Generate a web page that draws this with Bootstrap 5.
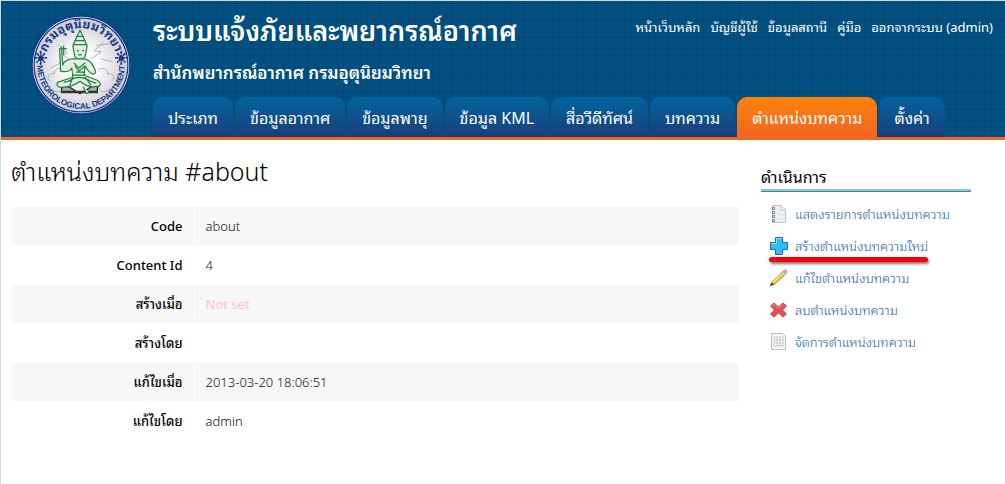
<!DOCTYPE html>
<html lang="th">
<head>
<meta charset="utf-8">
<meta name="viewport" content="width=device-width, initial-scale=1">
<title>ระบบแจ้งภัยและพยากรณ์อากาศ</title>
<link href="https://cdn.jsdelivr.net/npm/bootstrap@5.3.0/dist/css/bootstrap.min.css" rel="stylesheet">
<style>
body{font-family:"Noto Sans","Noto Sans Thai Looped",sans-serif;font-size:13px;line-height:20px;font-weight:300;color:#111;background:#fff}
a{text-decoration:none;white-space:nowrap}
.page{border-top:1px solid #c4e1ea;border-left:1px solid #c4e1ea;min-height:100vh}
.masthead{color:#fff;background-color:#015081;background-image:linear-gradient(#00000014 1px,transparent 1px),linear-gradient(90deg,#00000014 1px,transparent 1px),linear-gradient(#0000000b 1px,transparent 1px),linear-gradient(90deg,#0000000b 1px,transparent 1px);background-size:18px 18px,18px 18px,6px 6px,6px 6px;border-bottom:3px solid #f26522}
.seal{width:102px;height:102px;margin:13px 21px 0 29px}
.site-name{font-size:27px;line-height:36px;font-weight:600;margin:12px 0 0}
.site-owner{font-size:17px;line-height:24px;font-weight:600;margin:12px 0 12px}
.user-links{padding:16px 12px 0 0;gap:10px;font-weight:400}
.user-links a{color:#fff}
.tabs{gap:2px}
.tabs a{display:block;height:40px;padding:0 15px;line-height:42px;font-size:16px;font-weight:400;color:#fff;border-radius:10px 10px 0 0;background:linear-gradient(#0065a0,#1c3d78)}
.tabs a.active{background:linear-gradient(#ff8209,#f26522)}
.main-col{padding-left:10px}
.side-col{flex:0 0 244px;padding:26px 34px 0 0}
h1{font-size:25px;line-height:36px;font-weight:300;color:#000;margin:13px 0 17px}
.detail{width:calc(100% - 21px);border-collapse:separate;border-spacing:1px}
.detail th,.detail td{height:38px;padding:0 11px;vertical-align:middle}
.detail th{width:25%;text-align:right;font-weight:500;color:#000}
.detail tr:nth-child(odd)>*{background:#f7f7f7}
.unset{color:pink;font-weight:400}
h2{font-size:16px;line-height:22px;font-weight:400;color:#000;margin:0 0 6px;padding-bottom:3px;border-bottom:1px solid #2a8f9c;box-shadow:inset 0 -2px #8ec9cf}
.ops a{display:inline-flex;align-items:center;gap:6px;height:32px;color:#1262b0;position:relative}
.ops{padding-left:8px}
.ops svg{width:20px;height:20px}
.ops a.marked::after{content:"";position:absolute;left:0;right:0;bottom:0;height:5px;border-radius:3px;background:#f8000b;box-shadow:1px 2px 3px #0008}
</style>
</head>
<body>
<div class="page">
<header class="masthead d-flex align-items-start">
<svg class="seal flex-shrink-0" viewBox="0 0 100 100" role="img" aria-label="กรมอุตุนิยมวิทยา">
<defs><path id="arcTop" d="M14 50a36 36 0 0 1 72 0"/><path id="arcLow" d="M7 50a43 43 0 0 0 86 0"/><radialGradient id="glow"><stop offset=".3" stop-color="#fff"/><stop offset="1" stop-color="#cfcbd8"/></radialGradient></defs>
<circle cx="50" cy="50" r="48" fill="#fff" stroke="#163a84" stroke-width="1.4"/>
<circle cx="50" cy="50" r="46" fill="url(#glow)" stroke="#163a84" stroke-width="1.3"/>
<g fill="#173b83" font-weight="700"><text font-size="12" text-anchor="middle"><textPath href="#arcTop" startOffset="50%">กรมอุตุนิยมวิทยา</textPath></text>
<text font-size="8" font-family="Liberation Sans,sans-serif" text-anchor="middle"><textPath href="#arcLow" startOffset="50%">METEOROLOGICAL DEPARTMENT</textPath></text></g>
<g stroke="#173b83" stroke-width="1.8" stroke-linecap="round" stroke-dasharray="1.5 2"><path d="M5 43h11M10.500 37v12M7 39l7 8M14 39l-7 8M84 43h11M89.500 37v12M86 39l7 8M93 39l-7 8"/></g>
<g fill="none" stroke="#9a97a3" stroke-width=".7"><path d="M20 66c-5-4-1-9 4-7-1-6 7-8 9-3M80 66c5-4 1-9-4-7 1-6-7-8-9-3M22 74c5 5 11 1 11-3M78 74c-5 5-11 1-11-3M28 30l9 8-5 2 8 5M72 28l-9 8 7 1-10 7M65 31l13-2M70 44l11 3M20 53l10-5"/></g>
<path d="M31 67l18 11 17-10v9H31zM32 76h34" fill="#aaa" stroke="#333" stroke-width="1.4"/>
<g fill="#e2efe2" stroke="#21803c" stroke-width="1.2" stroke-linejoin="round"><path d="M49 16l7 15-2 11q-5 5-10 0l-2-11z"/><path d="M44 26h10M43 30h12M45 22h8M46 36h2m3 0h2M47 40h4"/><path d="M43 44q-9 0-11 6l-1-17-2 1 1 22q8 2 11-3l1 9-15 5q-2 4 3 5 12 0 19-6 8 7 17 5 6-1 0-6l-13-5 1-9q4 7 8 8 4-1 1-6-4-10-13-9z"/><path d="M33 31v9M30 34h6M38 66q9-7 20-1M43 48l5 5 6-5M44 51l4 5 6-5M45 57h9M42 60h12M42 62l-3 8M54 62l6 8M33 67l8-2M57 65l8 3M52 71l3 7 3-1"/></g>
</svg>
<div class="flex-grow-1">
<div class="d-flex justify-content-between">
<div><p class="site-name">ระบบแจ้งภัยและพยากรณ์อากาศ</p><p class="site-owner">สำนักพยากรณ์อากาศ กรมอุตุนิยมวิทยา</p></div>
<nav class="user-links d-flex"><a href="#">หน้าเว็บหลัก</a><a href="#">บัญชีผู้ใช้</a><a href="#">ข้อมูลสถานี</a><a href="#">คู่มือ</a><a href="#">ออกจากระบบ (admin)</a></nav>
</div>
<nav class="tabs d-flex"><a href="#">ประเภท</a><a href="#">ข้อมูลอากาศ</a><a href="#">ข้อมูลพายุ</a><a href="#">ข้อมูล KML</a><a href="#">สื่อวีดีทัศน์</a><a href="#">บทความ</a><a href="#" class="active" aria-current="page">ตำแหน่งบทความ</a><a href="#">ตั้งค่า</a></nav>
</div>
</header>
<div class="d-flex">
<main class="main-col flex-grow-1">
<h1>ตำแหน่งบทความ #about</h1>
<table class="detail">
<tr><th scope="row">Code</th><td>about</td></tr>
<tr><th scope="row">Content Id</th><td>4</td></tr>
<tr><th scope="row">สร้างเมื่อ</th><td><span class="unset">Not set</span></td></tr>
<tr><th scope="row">สร้างโดย</th><td></td></tr>
<tr><th scope="row">แก้ไขเมื่อ</th><td>2013-03-20 18:06:51</td></tr>
<tr><th scope="row">แก้ไขโดย</th><td>admin</td></tr>
</table>
</main>
<aside class="side-col">
<h2>ดำเนินการ</h2>
<ul class="ops list-unstyled d-flex flex-column align-items-start">
<li><a href="#"><svg viewBox="0 0 20 20"><path d="M3.500 1.500h9l4 4v13h-13z" fill="#eaf0f6" stroke="#bcc3ca"/><path d="M12.500 1.500v4h4" fill="#fff" stroke="#bcc3ca"/><path d="M9 7h5M9 11h6M9 15h6" stroke="#d5dde5"/><g fill="#fff" stroke="#667"><path d="M3.500 3.500h2v2h-2zM3.500 7.500h2v2h-2zM3.500 11.500h2v2h-2zM3.500 15.500h2v2h-2z" stroke-width=".8"/></g></svg>แสดงรายการตำแหน่งบทความ</a></li>
<li><a href="#" class="marked"><svg viewBox="0 0 20 20"><path d="M6.500 1.500h7v5h5v7h-5v5h-7v-5h-5v-7h5z" fill="#30bdf5" stroke="#176fae" stroke-linejoin="round"/><path d="M7.500 7.500v-5h5M2.500 7.500h5" stroke="#8be0ff" fill="none"/></svg>สร้างตำแหน่งบทความใหม่</a></li>
<li><a href="#"><svg viewBox="0 0 20 20"><path d="M1.500 17.500l2-4L13 4l3 3-10 9z" fill="#f4bd43" stroke="#b9892e" stroke-width=".8"/><path d="M4 14.500L13.500 5" stroke="#ffe79a" stroke-width="1.2"/><path d="M12 5l2-2 3 3-2 2z" fill="#d8dce2" stroke="#999" stroke-width=".6"/><path d="M13.500 3.500l1.500-1.500q3-1 3 2.500L16.500 6z" fill="#f2a3a8" stroke="#c37a80" stroke-width=".6"/><path d="M1 18l1.500-3.500 2.500 2z" fill="#333"/></svg>แก้ไขตำแหน่งบทความ</a></li>
<li><a href="#"><svg viewBox="0 0 20 20"><path d="M5 3l4.500 4L14 3l3.500 3L13.500 10l4 4L14 17l-4.500-4L5 17l-3.500-3L5.500 10l-4-4z" fill="#dc5353" stroke="#c74848" stroke-linejoin="round"/><path d="M3 6l2-1.500 4.500 4L14 4.500" fill="none" stroke="#ee8c8c"/></svg>ลบตำแหน่งบทความ</a></li>
<li><a href="#"><svg viewBox="0 0 20 20"><path d="M2.500 1.500h11l3 3v13h-14z" fill="#f7f7f7" stroke="#bbb"/><path d="M5 5h9v9H5zM5 8h9M5 11h9M8 5v9M11 5v9" fill="#fff" stroke="#c6c6c6"/></svg>จัดการตำแหน่งบทความ</a></li>
</ul>
</aside>
</div>
</div>
<script src="https://cdn.jsdelivr.net/npm/bootstrap@5.3.0/dist/js/bootstrap.bundle.min.js"></script>
</body>
</html>
